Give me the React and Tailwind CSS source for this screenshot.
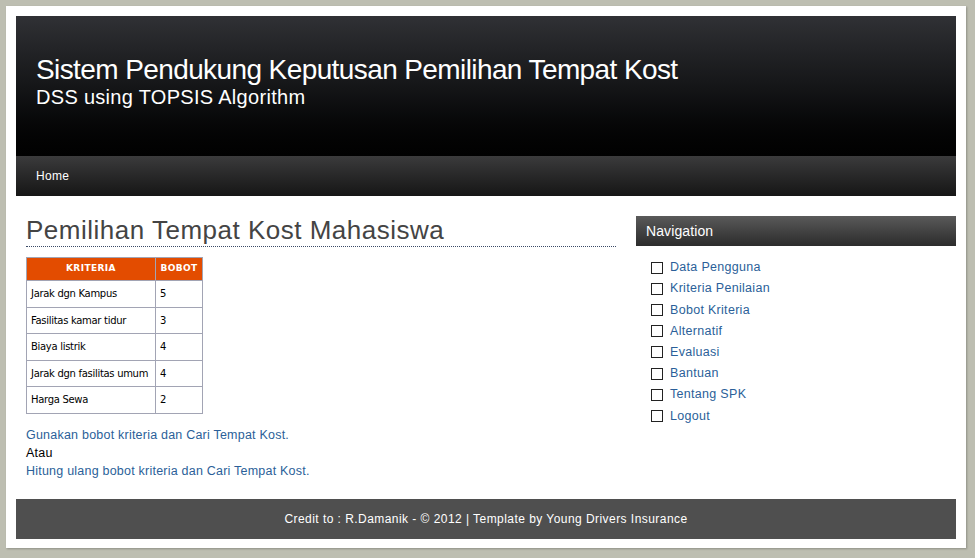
const KRITERIA = [
  { nama: "Jarak dgn Kampus", bobot: 5 },
  { nama: "Fasilitas kamar tidur", bobot: 3 },
  { nama: "Biaya listrik", bobot: 4 },
  { nama: "Jarak dgn fasilitas umum", bobot: 4 },
  { nama: "Harga Sewa", bobot: 2 },
];

const MENU = [
  "Data Pengguna",
  "Kriteria Penilaian",
  "Bobot Kriteria",
  "Alternatif",
  "Evaluasi",
  "Bantuan",
  "Tentang SPK",
  "Logout",
];

export default function App() {
  return (
    <div className="h-[558px] bg-[#bdbeb1] p-[6px] font-['Liberation_Sans',Arial,sans-serif]">
      <div className="h-[542px] w-[960px] bg-white p-[10px] shadow-[1px_1px_2px_rgba(0,0,0,0.25)]">
        {/* Header */}
        <header className="h-[140px] bg-gradient-to-b from-[#303135] via-[#151618] to-[#010101] px-5 pt-[37px]">
          <h1 className="text-[28px] leading-[34px] text-white tracking-[-0.6px]">
            Sistem Pendukung Keputusan Pemilihan Tempat Kost
          </h1>
          <p className="text-[20px] leading-[20px] text-white tracking-[0.3px]">DSS using TOPSIS Algorithm</p>
        </header>

        {/* Menu bar */}
        <nav className="h-[40px] bg-gradient-to-b from-[#3b3b3c] to-[#161616] px-5 flex items-center">
          <a className="text-[12px] text-white tracking-[0.3px]">Home</a>
        </nav>

        <div className="flex gap-[20px] pt-5 h-[303px]">
          {/* Content */}
          <main className="w-[600px] shrink-0 pl-[10px]">
            <h2 className="text-[26px] leading-[28px] text-[#444] tracking-[0.5px] pb-[2px] border-b border-dotted border-[#3a4a66]">
              Pemilihan Tempat Kost Mahasiswa
            </h2>

            <table className="mt-[10px] border-collapse font-['DejaVu_Sans',Tahoma,sans-serif] text-[10px] text-black">
              <thead>
                <tr className="bg-[#e34c00] text-white h-[23px]">
                  <th className="w-[129px] border border-[#a2a4b4] text-[9px] font-bold tracking-[0.4px]">KRITERIA</th>
                  <th className="w-[47px] border border-[#a2a4b4] text-[9px] font-bold tracking-[0.4px]">BOBOT</th>
                </tr>
              </thead>
              <tbody>
                {KRITERIA.map((k) => (
                  <tr key={k.nama} className="h-[26.5px]">
                    <td className="border border-[#a2a4b4] px-[4px] tracking-[-0.3px]">{k.nama}</td>
                    <td className="border border-[#a2a4b4] px-[4px]">{k.bobot}</td>
                  </tr>
                ))}
              </tbody>
            </table>

            <div className="mt-[12px] text-[12.5px] leading-[18px] tracking-[0.22px]">
              <a className="block text-[#2b5f99]">Gunakan bobot kriteria dan Cari Tempat Kost.</a>
              <p className="text-black">Atau</p>
              <a className="block text-[#2b5f99]">Hitung ulang bobot kriteria dan Cari Tempat Kost.</a>
            </div>
          </main>

          {/* Sidebar */}
          <aside className="w-[320px] shrink-0">
            <div className="h-[30px] bg-gradient-to-b from-[#5a5a5a] to-[#2c2c2c] px-[10px] flex items-center">
              <span className="text-[14px] text-white tracking-[0.1px]">Navigation</span>
            </div>
            <ul className="mt-[11px] pl-[15px]">
              {MENU.map((m) => (
                <li key={m} className="flex items-center h-[21.2px]">
                  <span className="w-[12px] h-[12px] border border-[#222] mr-[7px]" />
                  <a className="text-[12.5px] text-[#2b5f99] tracking-[0.3px]">{m}</a>
                </li>
              ))}
            </ul>
          </aside>
        </div>

        {/* Footer */}
        <footer className="h-[40px] bg-[#4f4f4f] flex items-center justify-center">
          <p className="text-[12px] text-white tracking-[0.45px]">
            Credit to : R.Damanik - © 2012 | Template by Young Drivers Insurance
          </p>
        </footer>
      </div>
    </div>
  );
}
